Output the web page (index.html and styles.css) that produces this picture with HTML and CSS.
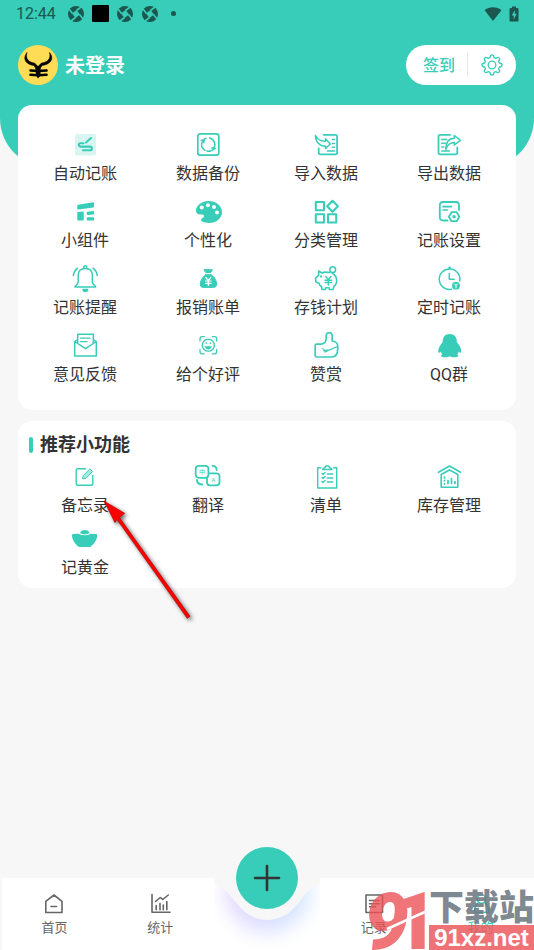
FILE: index.html
```html
<!DOCTYPE html>
<html lang="zh-CN">
<head>
<meta charset="utf-8">
<meta name="viewport" content="width=device-width, initial-scale=1">
<title>我的</title>
<link rel="stylesheet" href="styles.css">
</head>
<body>
<div class="screen">
  <header class="header">
    <div class="status">
      <span class="clock">12:44</span>
      <svg class="status-icon" viewBox="0 0 18 18"><circle cx="9" cy="9" r="8" fill="currentColor"/><path d="M5 8.500 9.500 5 13 9.500 8.500 13Z" fill="#38cdb8"/><path d="M5.500 8.500 2 4M9.500 5.500 14 2M12.500 9.500 16 14M8.500 12.500 4 16" stroke="#38cdb8" stroke-width="1.600"/></svg>
      <span class="status-square"></span>
      <svg class="status-icon" viewBox="0 0 18 18"><circle cx="9" cy="9" r="8" fill="currentColor"/><path d="M5 8.500 9.500 5 13 9.500 8.500 13Z" fill="#38cdb8"/><path d="M5.500 8.500 2 4M9.500 5.500 14 2M12.500 9.500 16 14M8.500 12.500 4 16" stroke="#38cdb8" stroke-width="1.600"/></svg>
      <svg class="status-icon" viewBox="0 0 18 18"><circle cx="9" cy="9" r="8" fill="currentColor"/><path d="M5 8.500 9.500 5 13 9.500 8.500 13Z" fill="#38cdb8"/><path d="M5.500 8.500 2 4M9.500 5.500 14 2M12.500 9.500 16 14M8.500 12.500 4 16" stroke="#38cdb8" stroke-width="1.600"/></svg>
      <span class="status-dot"></span>
      <svg class="wifi" viewBox="0 0 18 16"><path d="M.6 4.2C5.500.4 12.500.4 17.400 4.200L9 15Z" fill="currentColor"/></svg>
      <svg class="battery" viewBox="0 0 10 16"><path d="M3 .5h4V2h1.500q1 0 1 1v11.500q0 1-1 1h-7q-1 0-1-1V3q0-1 1-1H3Z" fill="currentColor"/><path d="M5.800 4 2.800 9.500h1.900V13.500l3-5.800H5.800Z" fill="#38cdb8"/></svg>
    </div>
    <div class="profile">
      <svg class="avatar" viewBox="0 0 40 40"><circle cx="20" cy="20" r="20" fill="#ffdc55"/><path d="M9 7.500C4 14 8 19.500 16 20.500L18.500 24.500h3L24 20.500C32 19.500 37 14 31.500 7.500 33.500 14 29 17.500 23.500 18L20 21.500 16.500 18C11 17.500 7 14 9 7.500Z" fill="#000" stroke="#000" stroke-width=".6"/><path d="M12.500 25.500q7.500.8 16 0M12.500 29.800q7.500.8 16 0" fill="none" stroke="#000" stroke-width="2.600" stroke-linecap="round"/><path d="M17.500 23h5v7.500L20 33.500 18 30.500Z"/></svg>
      <h1 class="name">未登录</h1>
      <div class="pill">
        <button class="sign" type="button">签到</button>
        <button class="gear" type="button" aria-label="设置"><svg viewBox="0 0 24 24" class="line"><circle cx="12" cy="12" r="3.800"/><path d="M10 4.600C10.300 1 13.700 1 14 4.600L15.800 5.400C18.600 3 21 5.400 18.600 8.200L19.400 10C23 10.300 23 13.700 19.400 14L18.600 15.800C21 18.600 18.600 21 15.800 18.600L14 19.400C13.700 23 10.300 23 10 19.400L8.200 18.600C5.400 21 3 18.600 5.400 15.800L4.600 14C1 13.700 1 10.300 4.600 10L5.400 8.200C3 5.400 5.400 3 8.200 5.400Z"/></svg></button>
      </div>
    </div>
  </header>

  <main class="content">
    <section class="card main-card">
      <div class="grid">
        <button class="tile" type="button"><svg viewBox="0 0 28 28" class="line"><rect x="4" y="3" width="21" height="21.400" rx="2" fill="#d8f5f1" stroke="none"/><path d="M12.500 12.200H9.500a1.700 1.700 0 0 0 0 3.400h9.500a1.800 1.800 0 0 1 0 3.600H12M15 11.500 20 7" stroke-width="2.100"/></svg><span>自动记账</span></button>
        <button class="tile" type="button"><svg viewBox="0 0 28 28" class="line"><rect x="3.800" y="2.800" width="21" height="21.400" rx="2.500" stroke-width="1.700"/><path d="M15.500 7A6.700 6.700 0 0 1 20 17M17 19.700A6.700 6.700 0 0 1 13 20M8.700 10A6.700 6.700 0 0 1 12 7.200M11 19.300A6.700 6.700 0 0 1 8 11.500" stroke-width="1.500"/><path d="M7 9 10.700 8.700 10 12ZM18 16.500 21.700 17.200 18.700 19.800Z" class="solid" stroke-width=".8"/></svg><span>数据备份</span></button>
        <button class="tile" type="button"><svg viewBox="0 0 28 28" class="line"><path d="M11.500 3.800H23.300q1.800 0 1.800 1.800V21.500q0 1.800-1.800 1.800H8.500q-1.800 0-1.800-1.800V17.500" stroke-width="1.800"/><path d="M3.500 4.500C5.500 8.500 9 10.500 13.500 10.200V7.800L18.300 13 13.500 17.500V15.200C7.500 15.300 3.500 11 3.500 4.500Z" stroke-width="1.500"/><path d="M20.300 8.500h2M20.500 12.500h2M20.300 16.300h2M15.500 20h7" stroke-width="1.500"/></svg><span>导入数据</span></button>
        <button class="tile" type="button"><svg viewBox="0 0 28 28" class="line"><path d="M15 3.800H5.300Q3.500 3.800 3.500 5.600V21.500q0 1.800 1.800 1.800H20.500q1.800 0 1.800-1.800V16.500" stroke-width="1.800"/><path d="M10.800 18.500C10.800 11.500 13.500 7.500 19.300 7.300V4.500L25.500 9.300 19.300 14V11.500C14.500 11.500 12.300 14 10.800 18.500Z" stroke-width="1.500"/><path d="M6.800 8.500h5M6.800 12.300h3.500M6.800 16h2M6.800 20h7.500" stroke-width="1.500"/></svg><span>导出数据</span></button>

        <button class="tile" type="button"><svg viewBox="0 0 28 28" class="line"><path d="M7 7.500 22.300 5V8.700L7 10.800ZM7 14.700 12 14.200V21.800H7ZM16.500 14.500 22.300 13.700V15.700L16.500 16.200ZM16.500 20H22.300V21.800H16.500Z" class="solid" stroke-width="1.500"/></svg><span>小组件</span></button>
        <button class="tile" type="button"><svg viewBox="0 0 28 28"><path d="M14.500 3C22 3 28 7.800 28 14S22.500 25 15 25C9.500 25 6.500 23.200 7 21.500 7.500 20 10.500 19.500 10 17.500 9.300 15.500 5.500 17.500 3.200 15.500-.5 12 4.500 3 14.500 3Z" fill="currentColor"/><g fill="#fff"><circle cx="7.800" cy="9.500" r="2"/><circle cx="13.900" cy="7.300" r="2"/><circle cx="20" cy="9" r="2"/><circle cx="23" cy="14.600" r="2"/></g></svg><span>个性化</span></button>
        <button class="tile" type="button"><svg viewBox="0 0 28 28" class="line"><path d="M3.800 4h8.200v8.200H3.800ZM3.800 16.200h8.200v8.200H3.800ZM16 16.200h8.200v8.200H16ZM20.500 2.700 25.900 8.200 20.500 13.700 15.100 8.200Z" stroke-width="2"/></svg><span>分类管理</span></button>
        <button class="tile" type="button"><svg viewBox="0 0 28 28" class="line"><path d="M24 12V7.500Q24 4 20.500 4H8.300Q4.800 4 4.800 7.500V19q0 3.500 3.500 3.500h4.200" stroke-width="1.800"/><path d="M8 8.600h8.500M8 12h4.500" stroke-width="1.600"/><path d="M16.500 14.200h5.200L24.300 18.700 21.700 23.200H16.500L13.900 18.700Z" stroke-width="1.800"/><circle cx="19.100" cy="18.700" r="1.700" class="solid" stroke="none"/></svg><span>记账设置</span></button>

        <button class="tile" type="button"><svg viewBox="0 0 28 28" class="line"><path d="M12.800 3.500V2.300a1.500 1.500 0 0 1 3 0V3.500M4 22C3.500 20.500 7.200 20 7.200 17V10.500C7.200 6 10 3.500 14.300 3.500S21.400 6 21.400 10.500V17c0 3 3.700 3.500 3.200 5Z" stroke-width="1.500"/><path d="M12 24.500h4.700Q16.500 26.500 14.300 26.500T12 24.500Z" class="solid"/><path d="M2.300 10.500Q3 6 6.500 3.200M26.300 10.500Q25.600 6 22.100 3.200" stroke-width="1.500"/></svg><span>记账提醒</span></button>
        <button class="tile" type="button"><svg viewBox="0 0 28 28" class="line"><path d="M10.300 4.500Q12.300 5.300 14.300 4.300 16.300 5.300 18.500 4.500L16.700 7.500H12ZM11.500 9.700h5.700C20.500 12 23 16 22.500 20Q22.200 22.400 19.500 22.400H9.300Q6.500 22.400 6.300 20C6 16 8.500 12 11.500 9.700Z" class="solid" stroke-width="1"/><path d="M11.800 12.500 14.300 15.500 16.800 12.500M11.500 16h5.600M11.500 18.300h5.600M14.300 15.500V20.500" stroke="#fff" stroke-width="1.200"/></svg><span>报销账单</span></button>
        <button class="tile" type="button"><svg viewBox="0 0 28 28" class="line"><circle cx="20.700" cy="4.700" r="2.900" stroke-width="1.500"/><path d="M17.500 7.500C14 6.800 11.500 7 10 8L6.700 6V9.500C6.300 11.500 4.500 12.300 3.500 13L4 17 7 18.200C7.500 20 8.500 21 9.500 21.500L10 24.500H13.200L13.700 22.700H17L17.500 24.500H21L22 21.300C26 18 25.500 11 20.500 8.500" stroke-width="1.600"/><circle cx="9" cy="11.500" r=".5"/><path d="M13.500 11.500 16.300 14.500 19.100 11.500M13 15.200h6.600M13 17.500h6.600M16.300 14.500V20" stroke-width="1.400"/></svg><span>存钱计划</span></button>
        <button class="tile" type="button"><svg viewBox="0 0 28 28" class="line"><path d="M16.500 24.300A10.300 10.300 0 1 1 24.700 16" stroke-width="1.500"/><path d="M14.300 8.500V14.300H19.200" stroke-width="1.500"/><circle cx="14.600" cy="2.700" r="1.300" class="solid" stroke="none"/><circle cx="21" cy="20.700" r="3.900" class="solid" stroke="none"/><path d="M19.700 19 21 20.700 22.300 19M21 20.700V23" stroke="#fff" stroke-width="1"/></svg><span>定时记账</span></button>

        <button class="tile" type="button"><svg viewBox="0 0 28 28" class="line"><path d="M6.700 11.500V2.200H22.300V11.500M6.500 7.500 3.700 9.500V24H25.300V9.500L22.500 7.500M3.700 9.500 14.500 16.700 25.300 9.500" stroke-width="1.500"/><path d="M9.500 6.200h9.500M9.500 9.700h6.500" stroke-width="1.300"/></svg><span>意见反馈</span></button>
        <button class="tile" type="button"><svg viewBox="0 0 28 28" class="line"><path d="M6 9V6.700Q6 4.700 8 4.700h2.300M18.300 4.700h2.300Q22.700 4.700 22.700 6.700V9M22.700 17.500v2.300Q22.700 21.800 20.700 21.800H18.300M10.300 21.800H8Q6 21.800 6 19.800V17.500"/><circle cx="14.300" cy="13.200" r="6"/><path d="M11.300 14.500h6Q17 17.200 14.300 17.200T11.300 14.500Z" class="solid" stroke-width=".5"/><path d="M12.200 11v.5M16.500 11v.5" stroke-width="1.400"/></svg><span>给个好评</span></button>
        <button class="tile" type="button"><svg viewBox="0 0 28 28" class="line"><path d="M4.500 12.200H8.500C12.500 12 14.200 9.500 14.200 6.500V3.500C14.200-.2 20.200-.2 20.200 3.500V9C23 9.500 25.700 10.500 25.700 13.500V17C25.700 22 23.500 25 19.500 25H4.700Q3.200 25 3.200 23.500V13.500Q3.200 12.200 4.500 12.200Z" stroke-width="1.700"/><path d="M25.500 14.500 13.500 19.700" stroke-width="1.300"/><path d="M10.500 16.500 13.200 18.200 16 17.800 13.200 20.300Z" class="solid" stroke-width=".7"/></svg><span>赞赏</span></button>
        <button class="tile" type="button"><svg viewBox="0 0 28 28"><path d="M14.700 2C19.500 2 22 5.500 21.800 10 24.300 13 26.800 17 26.100 20.300 25.600 21.500 24.600 20.500 23.700 19.500 23.500 20.800 22.900 21.700 22.200 22.500 24.500 23.500 23 25.300 20 25.300 17.500 25.300 16 24.800 14.700 24.200 13.500 24.800 12 25.300 9.500 25.300 6.500 25.300 5 23.500 7.300 22.500 6.600 21.700 6 20.800 5.800 19.500 4.900 20.500 3.900 21.500 3.400 20.300 2.700 17 5.200 13 7.700 10 7.500 5.500 10 2 14.700 2Z" fill="currentColor"/></svg><span>QQ群</span></button>
      </div>
    </section>

    <section class="card tools-card">
      <h2 class="card-title">推荐小功能</h2>
      <div class="grid">
        <button class="tile" type="button"><svg viewBox="0 0 28 28" class="line"><path d="M14.500 5.700H7Q5.200 5.700 5.200 7.500V20.500q0 1.800 1.800 1.800H20q1.800 0 1.800-1.800V12.500" stroke-width="1.400"/><path d="M12.500 12.300 18.800 6 21.500 8.500 15 15.300 11.800 15.700Z" fill="#a8e8df" stroke-width="1"/></svg><span>备忘录</span></button>
        <button class="tile" type="button"><svg viewBox="0 0 28 28" class="line"><rect x="1.700" y="2.800" width="12.700" height="12" rx="3" stroke-width="1.800"/><path d="M15.500 10.300H22.500q3 0 3 3V19.300q0 3-3 3H16q-3 0-3-3V15.500" stroke-width="1.800"/><path d="M18.500 2.800Q22.700 2.800 22.700 7.200M2.800 17Q3.500 21.500 8.300 21.500" stroke-width="1.800"/><text x="5" y="11" class="mini">中</text><text x="17.500" y="19" class="mini">A</text></svg><span>翻译</span></button>
        <button class="tile" type="button"><svg viewBox="0 0 28 28" class="line"><path d="M8.700 4.800H5.700V25H24.700V4.800H21.700" stroke-width="1.400"/><path d="M10.500 6.500H20L18 4.500H17.500A2.300 2.300 0 0 0 13 4.500H12.500Z" stroke-width="1.500"/><path d="M10 10.500 11 11.500 13 9.500M10 14.500 11 15.500 13 13.500M10 18.500 11 19.500 13 17.500M15.300 11h5.500M15.300 15h5.500M15.300 19h5.500" stroke-width="1.400"/></svg><span>清单</span></button>
        <button class="tile" type="button"><svg viewBox="0 0 28 28" class="line"><path d="M3.500 9.300 14.500 3 25.500 9.300" stroke-width="1.600"/><path d="M6.200 11.500 14.500 7 22.800 11.500V24.300H6.200Z" stroke-width="1.600"/><path d="M9.500 14v1M9.500 17.300v.5M9.500 20.500v.5M13 20.500V17.500M16.500 20.500V15.500M20 20.500V18.500" stroke-width="1.700"/></svg><span>库存管理</span></button>
        <button class="tile" type="button"><svg viewBox="0 0 28 28"><path d="M9 8.300C9.500 3.800 18 3.800 18.700 8.300Q13.800 10.500 9 8.300ZM1 10.200Q1 9 2.500 9L7.500 8.800Q13.800 11.800 20 8.800L24.700 9Q26.200 9 26.200 10.200 26.200 15.500 21 20.500 19.700 22 18 22H9Q7.500 22 6 20.500 1 15.500 1 10.200Z" fill="currentColor"/></svg><span>记黄金</span></button>
      </div>
    </section>
  </main>

  <nav class="tabs">
    <a class="tab" href="#home"><svg viewBox="0 0 24 24" class="line"><path d="M3.800 9.300 12 3 20 9.300V20.500H3.800ZM9 14.500h5.500" stroke-width="1.600"/></svg><span>首页</span></a>
    <a class="tab" href="#stats"><svg viewBox="0 0 24 24" class="line"><path d="M4 2.500V20.300H22M8.200 13.500V17.700M12 11.500V17.700M15.300 13V17.700M18.800 9.500V17.700M7.500 9.500 12.300 5.500 14.700 7.500 20.300 3" stroke-width="1.600"/></svg><span>统计</span></a>
    <div class="add-cell">
      <svg class="notch" viewBox="0 0 107 72" preserveAspectRatio="none">
        <defs><linearGradient id="glow"><stop offset="0" stop-color="#e2d4ff"/><stop offset="1" stop-color="#cfe6ff"/></linearGradient><filter id="soft" x="-50%" y="-50%" width="200%" height="200%"><feGaussianBlur stdDeviation="10"/></filter></defs>
        <path d="M0 0H107V72H0Z" fill="#fff"/><circle cx="53.500" cy="12" r="42" fill="url(#glow)" filter="url(#soft)"/>
        <path d="M0 0V5C12 9 17 19 25 28 40 46.500 67 46.500 82 28 90 19 95 9 107 5V0Z" fill="#f7f7f7"/>
      </svg>
      <button class="add" type="button" aria-label="记一笔"><svg viewBox="0 0 28 28"><path d="M14 2V26M2 14H26" fill="none" stroke="#333" stroke-width="2.600" stroke-linecap="round"/></svg></button>
    </div>
    <a class="tab" href="#records"><svg viewBox="0 0 24 24" class="line"><path d="M4 3H20.500V20.500H4ZM7.500 8.500h9.500M7.500 11.700h9.500M7.500 14.700h6" stroke-width="1.600"/></svg><span>记录</span></a>
    <a class="tab active" href="#me"><svg viewBox="0 0 24 24" class="line"><circle cx="12.500" cy="7" r="4.200" stroke-width="1.600"/><path d="M9 11C6.500 13 5.500 16 5.500 20.300H20C20 16 18.500 13 16 11" stroke-width="1.600"/></svg><span>我的</span></a>
  </nav>

  <svg class="arrow" viewBox="0 0 100 130"><path d="M4 5 24.700 17.300 19.500 21.500 90 120.300 87.200 122.300 17 23.500 15 26.700Z" fill="#fe0000" stroke="#a00" stroke-width=".6"/></svg>

  <div class="watermark">
    <svg class="mark" viewBox="0 0 64 60"><text x="-1" y="59" class="digit nine">9</text><text x="27" y="59" class="digit">1</text><path d="M22 39Q42 30 62 21" fill="none" stroke="#fff" stroke-width="2.500"/></svg>
    <div class="words"><span class="site">下载站</span><span class="domain">91xz.net</span></div>
  </div>
</div>
</body>
</html>
```
FILE: styles.css
```css
:root {
  --teal: #38cdb8;
  --page: #f7f7f7;
}

* {
  box-sizing: border-box;
}

body {
  margin: 0;
  background: var(--page);
  color: #333;
  font-family: Roboto, "Noto Sans CJK SC", sans-serif;
}

button {
  margin: 0;
  padding: 0;
  border: 0;
  background: none;
  color: inherit;
  font: inherit;
  cursor: pointer;
}

svg {
  display: block;
}

.line {
  fill: none;
  stroke: currentColor;
  stroke-width: 1.3;
  stroke-linecap: round;
  stroke-linejoin: round;
}

.solid {
  fill: currentColor;
}

.screen {
  position: relative;
  display: flex;
  flex-direction: column;
  min-height: 100vh;
  overflow: hidden;
}

/* Header */
.header {
  padding-bottom: 83px;
  border-radius: 0 0 50px 50px;
  background: var(--teal);
}

.status {
  display: flex;
  align-items: center;
  gap: 7px;
  height: 27px;
  padding: 0 15px 0 16px;
  color: #1b564f;
}

.clock {
  margin-right: 4px;
  font-size: 16px;
  line-height: 20px;
}

.status-icon {
  width: 18px;
  height: 18px;
}

.status-square {
  width: 17px;
  height: 17px;
  border-radius: 1px;
  background: #000;
}

.status-dot {
  width: 5px;
  height: 5px;
  margin: 0 auto 0 5px;
  border-radius: 50%;
  background: currentColor;
}

.wifi {
  width: 18px;
  height: 16px;
}

.battery {
  width: 10px;
  height: 16px;
}

.profile {
  display: flex;
  align-items: center;
  margin-top: 18px;
  padding: 0 18px;
}

.avatar {
  width: 40px;
  height: 40px;
}

.name {
  margin: 0 auto 0 7px;
  padding-top: 2px;
  color: #fff;
  font-size: 20px;
  font-weight: 700;
  line-height: 30px;
}

.pill {
  display: flex;
  align-items: center;
  height: 40px;
  padding-left: 17px;
  border-radius: 20px;
  background: #fff;
  color: var(--teal);
}

.sign {
  height: 24px;
  padding-right: 12px;
  border-right: 1px solid #e8e8e8;
  font-size: 16px;
  font-weight: 500;
  line-height: 26px;
}

.gear {
  padding: 0 12px;
}

.gear svg {
  width: 24px;
  height: 24px;
}

/* Cards */
.content {
  display: grid;
  gap: 11px;
  margin: -63px 18px 0;
}

.card {
  border-radius: 14px;
  background: #fff;
}

.main-card {
  padding: 26px 3px 23px;
}

.tools-card {
  padding: 12px 3px 8px;
}

.grid {
  display: grid;
  grid-template-columns: 128fr 118fr 118fr 128fr;
  row-gap: 12px;
}

.tools-card .grid {
  row-gap: 7px;
}

.tile {
  display: flex;
  flex-direction: column;
  align-items: center;
  gap: 3px;
  font-size: 16px;
  line-height: 24px;
}

.tile svg {
  width: 28px;
  height: 28px;
  color: var(--teal);
}

.mini {
  fill: var(--teal);
  stroke: none;
  font-size: 6px;
}

.card-title {
  display: flex;
  align-items: center;
  gap: 7px;
  margin: 0 0 6px;
  padding-left: 8px;
  font-size: 18px;
  font-weight: 700;
  line-height: 24px;
}

.card-title::before {
  width: 4px;
  height: 16px;
  border-radius: 2px;
  background: var(--teal);
  content: "";
}

/* Bottom tabs */
.tabs {
  display: grid;
  grid-template-columns: repeat(5, 1fr);
  height: 72px;
  margin-top: auto;
}

.tab {
  display: flex;
  flex-direction: column;
  align-items: center;
  gap: 2px;
  padding-top: 14px;
  background: #fff;
  color: #666;
  font-size: 13px;
  line-height: 20px;
  text-decoration: none;
}

.tab:first-child {
  margin-left: 2px;
}

.tab svg {
  width: 24px;
  height: 24px;
}

.active {
  color: var(--teal);
}

.add-cell {
  position: relative;
  display: flex;
  justify-content: center;
}

.notch {
  width: 100%;
  height: 72px;
}

.add {
  position: absolute;
  top: -31px;
  display: grid;
  place-items: center;
  width: 62px;
  height: 62px;
  border-radius: 50%;
  background: var(--teal);
}

.add svg {
  width: 28px;
  height: 28px;
}

/* Overlays */
.arrow {
  position: absolute;
  top: 496px;
  left: 100px;
  width: 100px;
  height: 130px;
  filter: drop-shadow(2px 2px 2px rgba(0, 0, 0, 0.6));
  pointer-events: none;
}

.watermark {
  position: absolute;
  right: 0;
  bottom: 0;
  display: flex;
  pointer-events: none;
}

.mark {
  width: 64px;
  height: 60px;
  overflow: visible;
  opacity: 0.8;
}

.digit {
  fill: #ec5358;
  font-family: Roboto, sans-serif;
  font-size: 80px;
  font-weight: 900;
}

.nine {
  font-style: italic;
}

.words {
  display: flex;
  flex-direction: column;
  width: 105px;
}

.site {
  height: 35px;
  color: rgba(108, 121, 130, 0.88);
  font-family: "Noto Sans CJK SC", sans-serif;
  font-size: 35px;
  font-weight: 900;
  line-height: 30px;
}

.domain {
  height: 25px;
  background: rgba(236, 83, 88, 0.82);
  color: #fff;
  font-family: "Liberation Sans", sans-serif;
  font-size: 24px;
  font-weight: 700;
  line-height: 26px;
  text-align: center;
}
```
